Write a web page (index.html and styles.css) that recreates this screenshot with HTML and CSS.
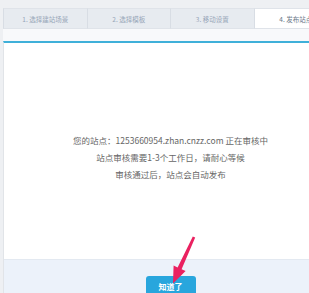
FILE: index.html
```html
<!DOCTYPE html>
<html lang="zh-CN">
<head>
  <meta charset="UTF-8">
  <title>发布站点</title>
  <link rel="stylesheet" href="styles.css">
</head>
<body>
  <div class="page">
    <!-- Steps -->
    <ul class="steps">
      <li>1. 选择建站场景</li>
      <li>2. 选择模板</li>
      <li>3. 移动设置</li>
      <li class="active">4. 发布站点</li>
    </ul>
    <div class="gap"></div>

    <div class="panel">
      <div class="body">
        <p>您的站点：1253660954.zhan.cnzz.com 正在审核中</p>
        <p>站点审核需要1-3个工作日，请耐心等候</p>
        <p>审核通过后，站点会自动发布</p>
      </div>
      <div class="footer">
        <button class="btn">知道了</button>
      </div>
    </div>
  </div>

  <svg class="arrow" width="32" height="52" viewBox="0 0 32 52">
    <polygon points="26.8,2.4 29.2,3.6 15.6,35.2 19.6,37 7,49.5 7.6,31.6 11.6,33.4" fill="#ea2160"/>
  </svg>
</body>
</html>
```
FILE: styles.css
```css
html, body {
  margin: 0;
  padding: 0;
  overflow: hidden;
}
body {
  font-family: "Noto Sans CJK SC", "Liberation Sans", sans-serif;
  background: #eef0f3;
  width: 309px;
  height: 293px;
  position: relative;
}
.page {
  width: 334px;
  margin-left: 3px;
  padding-top: 8px;
}
.steps {
  list-style: none;
  margin: 0;
  padding: 0;
  display: flex;
  height: 21px;
}
.steps li {
  flex: 1;
  text-align: center;
  font-size: 6.5px;
  line-height: 21px;
  color: #97a6b8;
  background: #e7ebf0;
  border-left: 1px solid #d8dde4;
  border-top: 1px solid #dfe3e9;
  border-bottom: 1px solid #dfe3e9;
  box-sizing: border-box;
}
.steps li.active {
  background: #fff;
  color: #6a7888;
}
.gap {
  height: 12px;
  background: #f8f9fb;
}
.panel {
  border-top: 2px solid #3fb0d9;
  border-left: 1px solid #e1e4e8;
  background: #fff;
}
.body {
  height: 216px;
  box-sizing: border-box;
  padding-top: 91px;
  text-align: center;
  font-size: 8.5px;
  color: #666;
}
.body p {
  margin: 0 0 5px;
  line-height: 12px;
}
.footer {
  background: #ecf2fa;
  height: 34px;
  border-top: 1px solid #e3e9f1;
  box-sizing: border-box;
  padding-top: 11px;
  text-align: center;
}
.btn {
  width: 50px;
  height: 21px;
  border: none;
  border-radius: 3px;
  background: #28a6dd;
  color: #fff;
  font-family: inherit;
  font-size: 8px;
  font-weight: bold;
  padding: 0;
}
.arrow {
  position: absolute;
  left: 166px;
  top: 234px;
}
```
